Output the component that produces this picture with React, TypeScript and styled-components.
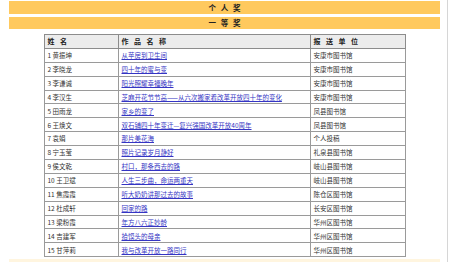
import styled, { createGlobalStyle } from 'styled-components';

const GlobalStyle = createGlobalStyle`
  html, body {
    margin: 0;
    padding: 0;
    background: #ffffff;
  }
  body {
    font-family: "Noto Sans CJK SC", "Noto Sans", sans-serif;
    color: #222;
  }
`;

const Page = styled.div`
  box-sizing: border-box;
  width: 448px;
  min-height: 262px;
  padding: 1px 7px 0 9px;
  border-right: 1px solid #d6d6d6;
  display: flex;
  flex-direction: column;
`;

const Banner = styled.div<{ $h: number; $gap: number; $pale?: boolean }>`
  height: ${(p) => p.$h}px;
  margin-top: ${(p) => p.$gap}px;
  background: ${(p) => (p.$pale ? '#fff5df' : '#ffc95e')};
  display: flex;
  align-items: center;
  justify-content: center;
  font-size: 7.5px;
  font-weight: 700;
  color: #222;
  letter-spacing: 4.8px;
  padding-left: 4.8px;
  line-height: 1;
`;

const Table = styled.table`
  margin: 5px auto 0;
  width: 349px;
  border-collapse: collapse;
  table-layout: fixed;
  border: 1px solid #7a7a7a;
  font-size: 6.5px;
  line-height: 1;
`;

const HeadCell = styled.th<{ $w: number }>`
  width: ${(p) => p.$w}px;
  height: 12.9px;
  padding: 0 0 0 3px;
  text-align: left;
  font-weight: 700;
  font-size: 7px;
  letter-spacing: 5.5px;
  background: #ececec;
  border: 1px solid #8c8c8c;
  color: #222;
`;

const Cell = styled.td`
  height: 12.9px;
  padding: 0 0 0 3px;
  border: 1px solid #9a9a9a;
  white-space: nowrap;
  overflow: hidden;
  color: #333;
`;

const WorkLink = styled.a`
  color: #3535c4;
  text-decoration: underline;
  text-underline-offset: 1px;
`;

type Entry = { no: number; name: string; work: string; unit: string };

const entries: Entry[] = [
  { no: 1, name: '黄振坤', work: '从苹房到卫生间', unit: '安康市图书馆' },
  { no: 2, name: '李晓龙', work: '四十年的蜜与变', unit: '安康市图书馆' },
  { no: 3, name: '李谦诚', work: '阳光照耀幸福晚年', unit: '安康市图书馆' },
  { no: 4, name: '李汉生', work: '芝麻开花节节高——从六次搬家看改革开放四十年的变化', unit: '安康市图书馆' },
  { no: 5, name: '田雨龙', work: '家乡的变了', unit: '凤县图书馆' },
  { no: 6, name: '王焕文', work: '双石铺四十年变迁—复兴强国改革开放40周年', unit: '凤县图书馆' },
  { no: 7, name: '袁娟', work: '那片美花海', unit: '个人投稿' },
  { no: 8, name: '宁玉莹', work: '照片记录岁月静好', unit: '礼泉县图书馆' },
  { no: 9, name: '侯文乾', work: '村口，那条西去的路', unit: '岐山县图书馆' },
  { no: 10, name: '王卫斌', work: '人生三步曲，命运两重天', unit: '岐山县图书馆' },
  { no: 11, name: '焦霞霞', work: '听大奶奶讲那过去的故事', unit: '陈仓区图书馆' },
  { no: 12, name: '杜成轩', work: '回家的路', unit: '长安区图书馆' },
  { no: 13, name: '梁粉霞', work: '年方八六正妙龄', unit: '华州区图书馆' },
  { no: 14, name: '吉建军', work: '拾馍头的母亲', unit: '华州区图书馆' },
  { no: 15, name: '甘萍莉', work: '我与改革开放一路同行', unit: '华州区图书馆' },
];

export default function App() {
  return (
    <>
      <GlobalStyle />
      <Page>
        <Banner $h={13} $gap={0}>个人奖</Banner>
        <Banner $h={12} $gap={3}>一等奖</Banner>
        <Table>
          <thead>
            <tr>
              <HeadCell $w={70}>姓名</HeadCell>
              <HeadCell $w={188}>作品名称</HeadCell>
              <HeadCell $w={91}>报送单位</HeadCell>
            </tr>
          </thead>
          <tbody>
            {entries.map((e) => (
              <tr key={e.no}>
                <Cell>
                  {e.no} {e.name}
                </Cell>
                <Cell>
                  <WorkLink href="#">{e.work}</WorkLink>
                </Cell>
                <Cell>{e.unit}</Cell>
              </tr>
            ))}
          </tbody>
        </Table>
        <Banner $h={6} $gap={2} $pale />
      </Page>
    </>
  );
}
